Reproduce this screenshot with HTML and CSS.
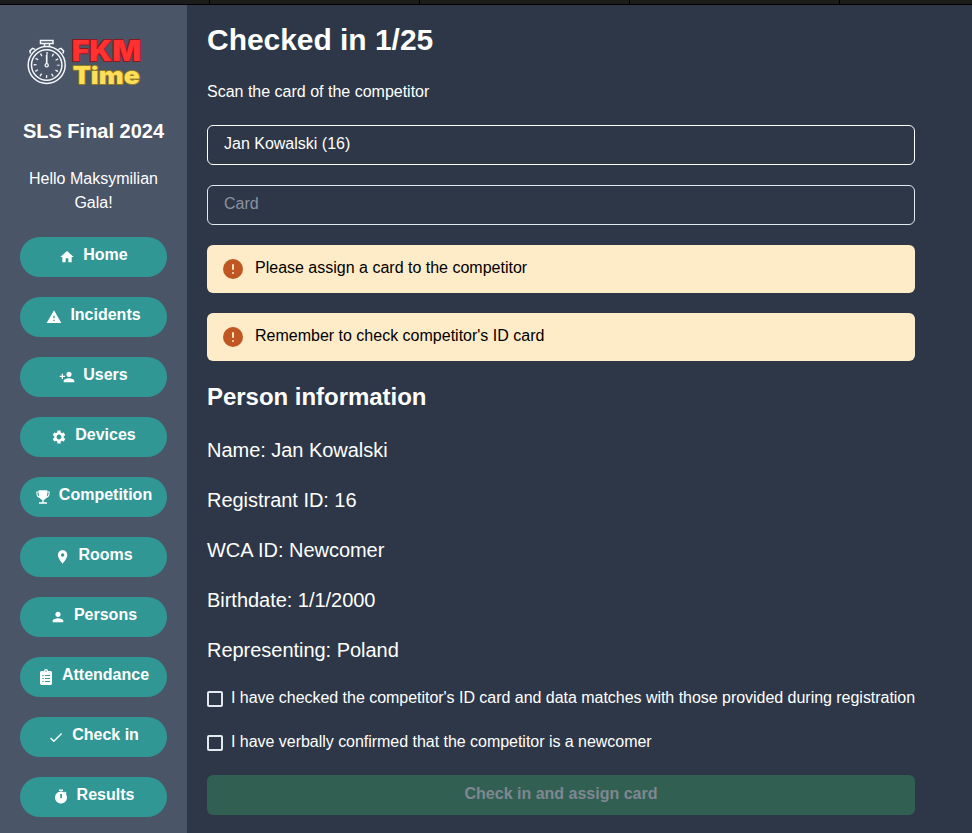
FILE: index.html
```html
<!DOCTYPE html>
<html lang="en">
<head>
<meta charset="utf-8">
<title>Check in - FKM Time</title>
<link rel="stylesheet" href="styles.css">
</head>
<body>
<div class="topbar"><i></i><i></i><i></i><i></i><i></i></div>
<div class="layout">
  <aside class="sidebar">
    <svg class="logo" width="147" height="74" viewBox="0 0 147 74" role="img" aria-label="FKM Time">
      <g fill="none" stroke="#f4f7fb">
        <circle cx="26.700" cy="40" r="18.500" stroke-width="1.500"/>
        <circle cx="26.700" cy="40" r="15.200" stroke-width="1.500"/>
        <circle cx="26.700" cy="40" r="11.500" stroke-width="3" stroke-dasharray="1.300 4.721" stroke-dashoffset=".65"/>
        <path d="M20.500 15.500h12.500v3h-12.500zM24.500 18.500v3M29.500 18.500v3M10.500 28.500l-.6-2.500 2.600-2.600 2.700 1M43 28.500l.6-2.500-2.600-2.600-2.700 1" stroke-width="1.500"/>
        <path d="M26.700 30v8.500" stroke-width="1.700"/>
        <circle cx="26.700" cy="40.300" r="1.600" stroke-width="1.300"/>
      </g>
      <text class="logo-fkm" x="51.700" y="35.500" textLength="69.500" lengthAdjust="spacingAndGlyphs">FKM</text>
      <text class="logo-time" x="52.700" y="59" textLength="67" lengthAdjust="spacingAndGlyphs">Time</text>
    </svg>
    <h2 class="event">SLS Final 2024</h2>
    <p class="hello">Hello Maksymilian Gala!</p>
    <a class="nav"><svg viewBox="0 0 24 24"><path d="M10 20v-6h4v6h5v-8h3L12 3 2 12h3v8z"/></svg><span>Home</span></a>
    <a class="nav"><svg viewBox="0 0 24 24"><path d="M1 21h22L12 2 1 21zm12-3h-2v-2h2v2zm0-4h-2v-4h2v4z"/></svg><span>Incidents</span></a>
    <a class="nav"><svg viewBox="0 0 24 24"><path d="M15 12c2.210 0 4-1.790 4-4s-1.790-4-4-4-4 1.790-4 4 1.790 4 4 4zm-9-2V7H4v3H1v2h3v3h2v-3h3v-2H6zm9 4c-2.670 0-8 1.340-8 4v2h16v-2c0-2.660-5.330-4-8-4z"/></svg><span>Users</span></a>
    <a class="nav"><svg viewBox="0 0 24 24"><path d="M19.140 12.940c.04-.3.06-.61.06-.94 0-.32-.02-.64-.07-.94l2.030-1.580c.18-.14.23-.41.12-.61l-1.920-3.320c-.12-.22-.37-.29-.59-.22l-2.390.96c-.5-.38-1.030-.7-1.620-.94l-.36-2.540c-.04-.24-.24-.41-.48-.41h-3.840c-.24 0-.43.17-.47.41l-.36 2.540c-.59.24-1.130.57-1.620.94l-2.390-.96c-.22-.08-.47 0-.59.22L2.740 8.870c-.12.21-.08.47.12.61l2.030 1.580c-.05.3-.09.63-.09.94s.02.64.07.94l-2.030 1.580c-.18.14-.23.41-.12.61l1.920 3.320c.12.22.37.29.59.22l2.390-.96c.5.38 1.030.7 1.620.94l.36 2.540c.05.24.24.41.48.41h3.840c.24 0 .44-.17.47-.41l.36-2.540c.59-.24 1.130-.56 1.620-.94l2.390.96c.22.08.47 0 .59-.22l1.920-3.320c.12-.22.07-.47-.12-.61l-2.010-1.580zM12 15.600c-1.980 0-3.600-1.620-3.600-3.600s1.620-3.600 3.600-3.600 3.600 1.620 3.600 3.600-1.620 3.600-3.600 3.600z"/></svg><span>Devices</span></a>
    <a class="nav"><svg viewBox="0 0 24 24"><path fill-rule="evenodd" d="M5.500 2h13v1.700H22V6c0 4.200-2 7-5.300 7.400-.9 1.600-2.200 2.700-3.700 3.100v3.300h5V22H6v-2.200h5v-3.300c-1.500-.4-2.800-1.500-3.700-3.100C4 13 2 10.200 2 6V3.700h3.500zM3.600 5.400V6c0 2.700 1 4.700 2.800 5.400C5.800 9.700 5.500 7.600 5.500 5.400zm16.800 0h-1.900c0 2.200-.3 4.300-.9 6 1.800-.7 2.800-2.700 2.800-5.400z"/></svg><span>Competition</span></a>
    <a class="nav"><svg viewBox="0 0 24 24"><path d="M12 2C8.130 2 5 5.130 5 9c0 5.250 7 13 7 13s7-7.750 7-13c0-3.870-3.130-7-7-7zm0 9.500a2.500 2.500 0 0 1 0-5 2.500 2.500 0 0 1 0 5z" transform="translate(.9)"/></svg><span>Rooms</span></a>
    <a class="nav"><svg viewBox="0 0 24 24"><path d="M12 12c2.210 0 4-1.790 4-4s-1.790-4-4-4-4 1.790-4 4 1.790 4 4 4zm0 2c-2.670 0-8 1.340-8 4v2h16v-2c0-2.660-5.330-4-8-4z"/></svg><span>Persons</span></a>
    <a class="nav"><svg viewBox="0 0 384 512"><path d="M336 64h-80c0-35.300-28.700-64-64-64s-64 28.700-64 64H48C21.500 64 0 85.500 0 112v352c0 26.500 21.500 48 48 48h288c26.500 0 48-21.500 48-48V112c0-26.500-21.500-48-48-48zM96 424c-13.300 0-24-10.700-24-24s10.700-24 24-24 24 10.700 24 24-10.700 24-24 24zm0-96c-13.300 0-24-10.700-24-24s10.700-24 24-24 24 10.700 24 24-10.700 24-24 24zm0-96c-13.300 0-24-10.700-24-24s10.700-24 24-24 24 10.700 24 24-10.700 24-24 24zm96-192c13.300 0 24 10.700 24 24s-10.700 24-24 24-24-10.700-24-24 10.700-24 24-24zm128 368c0 4.400-3.600 8-8 8H168c-4.400 0-8-3.600-8-8v-16c0-4.400 3.600-8 8-8h144c4.400 0 8 3.600 8 8v16zm0-96c0 4.400-3.600 8-8 8H168c-4.400 0-8-3.600-8-8v-16c0-4.400 3.600-8 8-8h144c4.400 0 8 3.600 8 8v16zm0-96c0 4.400-3.600 8-8 8H168c-4.400 0-8-3.600-8-8v-16c0-4.400 3.600-8 8-8h144c4.400 0 8 3.600 8 8v16z"/></svg><span>Attendance</span></a>
    <a class="nav"><svg viewBox="0 0 16 16"><path d="M2.600 9l3.200 3.200L13.600 4.400" fill="none" stroke="#fff" stroke-width="1.350"/></svg><span>Check in</span></a>
    <a class="nav"><svg viewBox="0 0 16 16"><path fill-rule="evenodd" d="M6 .6h4v1.300H6zM12.300 2.600l1.300 1.300-.9.900a6 6 0 1 1-1.400-1.300zM7.200 5v4.200h1.700V5z"/></svg><span>Results</span></a>
  </aside>
  <main class="content">
    <h1>Checked in 1/25</h1>
    <p class="text">Scan the card of the competitor</p>
    <div class="field field-filled"><span>Jan Kowalski (16)</span></div>
    <div class="field field-empty"><span>Card</span></div>
    <div class="alert"><svg viewBox="0 0 20 20"><circle cx="10" cy="10" r="10"/><path d="M10 5.200v5.600M10 13.200v1.600"/></svg><span>Please assign a card to the competitor</span></div>
    <div class="alert"><svg viewBox="0 0 20 20"><circle cx="10" cy="10" r="10"/><path d="M10 5.200v5.600M10 13.200v1.600"/></svg><span>Remember to check competitor's ID card</span></div>
    <h2 class="section">Person information</h2>
    <p class="info">Name: Jan Kowalski</p>
    <p class="info">Registrant ID: 16</p>
    <p class="info">WCA ID: Newcomer</p>
    <p class="info">Birthdate: 1/1/2000</p>
    <p class="info">Representing: Poland</p>
    <label class="check"><i class="box"></i><span>I have checked the competitor's ID card and data matches with those provided during registration</span></label>
    <label class="check"><i class="box"></i><span>I have verbally confirmed that the competitor is a newcomer</span></label>
    <button class="submit" disabled><span>Check in and assign card</span></button>
  </main>
</div>
</body>
</html>
```
FILE: styles.css
```css
* { box-sizing: border-box; margin: 0; padding: 0; }
body {
  height: 833px;
  overflow: hidden;
  display: flex;
  flex-direction: column;
  background: #2d3748;
  color: #fff;
  font: 16px/24px "Liberation Sans", Arial, sans-serif;
}
.topbar {
  flex: none;
  height: 5px;
  display: grid;
  grid-template-columns: repeat(4, 210px) 1fr;
  background: #1c1c1c;
  border-bottom: 1px solid #000;
}
.topbar i { border-right: 1px solid #000; }
.topbar i:last-child { border-right: 0; }
.layout { flex: 1; min-height: 0; display: flex; }
.sidebar {
  flex: none;
  width: 187px;
  padding: 20px;
  display: flex;
  flex-direction: column;
  align-items: center;
  gap: 20px;
  background: #4a5568;
}
.sidebar > * { flex: none; }
.logo { display: block; }
.logo text { font-family: Inter, sans-serif; font-weight: 900; paint-order: stroke; stroke-width: 1.800px; stroke-linejoin: round; }
.logo-fkm { font-size: 28px; fill: #ff3131; stroke: #8c1820; }
.logo-time { font-size: 24px; fill: #ffde59; stroke: #8f7a25; }
.event { height: 30px; font-size: 20px; line-height: 25px; white-space: nowrap; }
.hello { height: 48px; margin-top: -2px; margin-bottom: 2px; text-align: center; }
.nav {
  width: 147px;
  height: 40px;
  display: flex;
  align-items: center;
  justify-content: center;
  gap: 8px;
  border-radius: 20px;
  background: #319795;
  font-weight: 700;
}
.nav svg { flex: none; width: 16px; height: 16px; fill: #fff; }
.nav span { padding-bottom: 4px; }
.content {
  flex: none;
  width: 748px;
  padding: 20px;
  display: flex;
  flex-direction: column;
  gap: 20px;
}
.content > * { flex: none; }
h1 { height: 36px; font-size: 30px; line-height: 29px; letter-spacing: -.04px; }
.text { height: 24px; line-height: 22px; }
.field {
  height: 40px;
  padding: 0 16px 2px;
  display: flex;
  align-items: center;
  border: 1px solid #fff;
  border-radius: 6px;
}
.field-empty { border-color: #e2e8f0; color: #8b929e; }
.alert {
  height: 48px;
  padding: 0 16px;
  display: flex;
  align-items: center;
  gap: 12px;
  border-radius: 6px;
  background: #feebc8;
  color: #000;
}
.alert svg { width: 20px; height: 20px; fill: #c05621; }
.alert path { fill: none; stroke: #feebc8; stroke-width: 1.900; }
.alert span { padding-bottom: 2px; }
.section { height: 36px; font-size: 24px; line-height: 31px; letter-spacing: -.03px; }
.info { height: 30px; font-size: 20px; line-height: 27px; letter-spacing: -.03px; }
.check { height: 24px; display: flex; align-items: center; gap: 8px; white-space: nowrap; letter-spacing: -.03px; }
.box { flex: none; width: 16px; height: 16px; border: 2px solid #e2e8f0; border-radius: 2px; }
.check span { padding-bottom: 2px; }
.submit {
  height: 40px;
  border: 0;
  border-radius: 6px;
  background: #316053;
  color: #7f8791;
  font: inherit;
  font-weight: 700;
}
.submit span { display: block; padding-bottom: 2px; }
```
